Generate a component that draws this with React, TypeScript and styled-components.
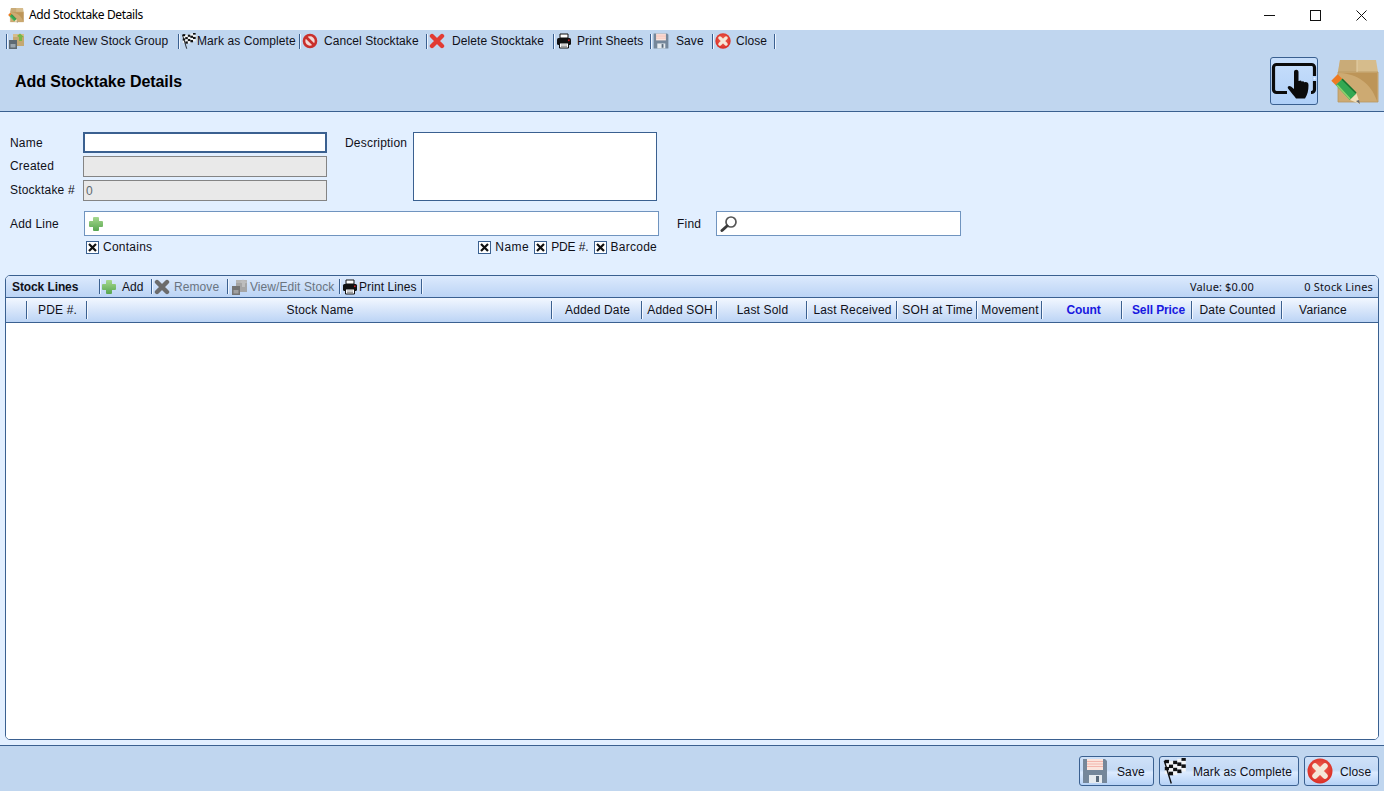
import React from "react";
import styled, { createGlobalStyle } from "styled-components";

const Global = createGlobalStyle`
  html, body { margin: 0; padding: 0; height: 100%; overflow: hidden; }
  body { font-family: "Liberation Sans", Arial, sans-serif; font-size: 12px; color: #101018; }
  * { box-sizing: border-box; }
`;

const Page = styled.div`
  width: 1384px; height: 791px; display: flex; flex-direction: column; background: #e2efff;
`;
const TitleBar = styled.div`
  height: 30px; flex: none; background: #fff; display: flex; align-items: center; padding-left: 8px;
`;
const TitleText = styled.span`
  font-family: "Noto Sans", sans-serif; font-size: 12px; margin: 0 0 1px 5px; color: #000; letter-spacing: -0.38px;
`;
const WinControls = styled.div`
  margin-left: auto; display: flex; height: 30px;
`;
const WinButton = styled.div`
  width: 46px; height: 30px; display: flex; align-items: center; justify-content: center;
`;
const Toolbar = styled.div`
  height: 22px; flex: none; background: #c0d6ef; display: flex; align-items: center; padding-left: 6px;
`;
const Sep = styled.span`
  width: 1px; height: 15px; flex: none; background: #3a6090; box-shadow: 1px 0 0 #eef5ff;
`;
const Tool = styled.div<{ $w: number; $gap: number; $pad?: number; $off?: boolean }>`
  width: ${p => p.$w}px; flex: none; display: flex; align-items: center; gap: ${p => p.$gap}px;
  padding-left: ${p => p.$pad ?? 2}px; white-space: nowrap; color: ${p => (p.$off ? "#6a7480" : "#101018")};
  letter-spacing: 0.08px;
`;
const Header = styled.div`
  height: 60px; flex: none; background: #c0d6ef; border-bottom: 1px solid #3a6090;
  display: flex; align-items: center; justify-content: space-between; padding: 0 5px 0 15px;
`;
const Heading = styled.h1`
  margin: 0; font-size: 16px; font-weight: 700; color: #000; letter-spacing: -0.05px;
`;
const HeaderIcons = styled.div`
  display: flex; gap: 13px; align-items: center; margin-bottom: 2px;
`;
const ModeButton = styled.div`
  width: 48px; height: 48px; border: 1px solid #3a6090; border-radius: 3px;
  background: linear-gradient(#c8dffb, #b0d0f8); display: flex; align-items: center; justify-content: center;
`;
const FormArea = styled.section`
  height: 163px; flex: none; padding: 20px 0 0 10px;
`;
const TopRow = styled.div`
  display: flex;
`;
const FieldColumn = styled.div`
  display: flex; flex-direction: column; gap: 3px;
`;
const FieldRow = styled.div`
  display: flex; align-items: center; height: 21px;
`;
const Label = styled.label<{ $w: number; $ml?: number; $raise?: boolean }>`
  width: ${p => p.$w}px; margin-left: ${p => p.$ml ?? 0}px; flex: none; letter-spacing: 0.2px; color: #101018;
  padding-bottom: ${p => (p.$raise ? 2 : 0)}px;
`;
const TextBox = styled.div<{ $focus?: boolean; $off?: boolean }>`
  width: 244px; height: 21px; padding-left: 2px; display: flex; align-items: center; color: #5f6a70;
  background: ${p => (p.$off ? "#e9e9e9" : "#fff")};
  border: ${p => (p.$focus ? "2px solid #3a6090" : "1px solid #848484")};
`;
const DescBlock = styled.div`
  display: flex; align-items: flex-start; margin-left: 18px;
`;
const DescLabel = styled(Label)`
  padding-top: 4px;
`;
const TextArea = styled.div`
  width: 244px; height: 69px; background: #fff; border: 1px solid #3a6090;
`;
const AddRow = styled.div`
  display: flex; align-items: center; margin-top: 10px;
`;
const SearchBox = styled.div<{ $w: number }>`
  width: ${p => p.$w}px; height: 25px; background: #fff; border: 1px solid #7094bf;
  display: flex; align-items: center; padding-left: 3px;
`;
const CheckRow = styled.div`
  width: 575px; margin: 4px 0 0 74px; height: 14px; display: flex; justify-content: space-between;
  padding: 0 2px;
`;
const CheckGroup = styled.div`
  display: flex; gap: 5px;
`;
const Check = styled.div<{ $ls: number }>`
  display: flex; align-items: center; gap: 4px; letter-spacing: ${p => p.$ls}px; white-space: nowrap;
`;
const Box = styled.span`
  width: 13px; height: 13px; background: #fff; border: 1px solid #3a6090; display: flex;
  align-items: center; justify-content: center;
`;
const Panel = styled.section`
  flex: 1; margin: 0 5px 5px; border: 1px solid #3a6090; border-radius: 5px; background: #fff;
  display: flex; flex-direction: column; overflow: hidden;
`;
const PanelBar = styled.div`
  height: 22px; flex: none; display: flex; align-items: center; padding-left: 6px; padding-right: 5px;
  background: linear-gradient(#dceafd, #bcd4f5); border-bottom: 1px solid #3a6090;
`;
const PanelTitle = styled.strong`
  width: 87px; flex: none; font-weight: 700; letter-spacing: -0.1px;
`;
const PanelStat = styled.span<{ $ml: string; $w?: number }>`
  margin-left: ${p => p.$ml}; ${p => (p.$w ? `width:${p.$w}px;text-align:right;` : "")}
  font-family: "Noto Sans", sans-serif; font-size: 11px; letter-spacing: 0.15px; color: #101018; white-space: nowrap;
`;
const ColumnRow = styled.div`
  height: 25px; flex: none; display: flex; align-items: center;
  background: linear-gradient(#f2f7ff, #bcd4f5); border-bottom: 1px solid #3a6090;
`;
const Column = styled.div<{ $w?: number; $blue?: boolean; $last?: boolean }>`
  ${p => (p.$w ? `width:${p.$w}px;flex:none;` : "flex:1;")}
  height: 18px; line-height: 19px; text-align: center; white-space: nowrap;
  letter-spacing: ${p => (p.$blue ? -0.1 : 0.16)}px;
  padding-left: ${p => (p.$last ? 0 : p.$blue ? 4 : 2)}px; padding-right: ${p => (p.$last ? 14 : 0)}px;
  color: ${p => (p.$blue ? "#1818e0" : "#101018")}; font-weight: ${p => (p.$blue ? 700 : 400)};
  ${p => (p.$last ? "" : "border-right:1px solid #3a6090;box-shadow:1px 0 0 #f4f8ff;")}
`;
const GridBody = styled.div`
  flex: 1; background: #fff;
`;
const Footer = styled.footer`
  height: 46px; flex: none; background: #c0d6ef; border-top: 1px solid #3a6090;
  display: flex; justify-content: flex-end; align-items: flex-start; gap: 5px; padding: 10px 5px 0 0;
`;
const FootButton = styled.button<{ $w: number; $gap: number }>`
  width: ${p => p.$w}px; height: 30px; padding: 0 0 0 2px; display: flex; align-items: center; gap: ${p => p.$gap}px;
  font: 12px "Liberation Sans", Arial, sans-serif; color: #101018; letter-spacing: 0.1px;
  border: 1px solid #3a6090; border-radius: 3px; white-space: nowrap;
  background: linear-gradient(#cfe1f8 0%, #c4daf5 45%, #dcebff 55%, #b6d2f6 100%);
`;
const FootLabel = styled.span`
  padding-top: 2px;
`;

type IP = { s?: number };

const CrateIcon = ({ s = 16 }: IP) => (
  <svg width={s} height={s} viewBox="0 0 48 48">
    <path d="M9 3h36l2 12H7z" fill="#d6bc8c" />
    <path d="M9 3h17v12H7z" fill="#c9ab78" />
    <path d="M7 15h40v30H7z" fill="#cdaa72" stroke="#b8985f" strokeWidth=".8" />
    <path d="M9 16c17 1 31 10 37 28V16z" fill="#bd9558" />
    <path d="M26 3v12" stroke="#e3cfa8" strokeWidth="1" />
    <path d="M3.500 20.500 8 25" stroke="#ee7a22" strokeWidth="9" />
    <path d="M8 25l14 15" stroke="#33a852" strokeWidth="9" />
    <path d="M6 28l13 14" stroke="#8ed06c" strokeWidth="1.600" />
    <path d="M11 22l14 14" stroke="#16732f" strokeWidth="1.600" />
    <path d="M25.500 36.500 19 43l10 4z" fill="#f1dfb9" />
    <path d="M25 44l4 3-1-4z" fill="#666" />
  </svg>
);
const GroupIcon = ({ off }: { off?: boolean }) => (
  <svg width="16" height="16" viewBox="0 0 16 16">
    <path d="M5 1h11v12H5z" fill={off ? "#a5a5a5" : "#c4a871"} />
    <path d="M5 1h11v3H5z" fill={off ? "#b5b5b5" : "#d6bc8c"} />
    <path d="M9 3l3-2.500L16 4l-2 .3V8h-3V4.300z" fill={off ? "#bdbdbd" : "#7ab648"} />
    <path d="M1 7h8v9H1z" fill={off ? "#757575" : "#5e6a72"} />
    <path d="M2.500 11h5v3.500h-5z" fill={off ? "#a0a0a0" : "#9aa6ae"} />
  </svg>
);
const Flag = ({ s = 16 }: IP) => {
  const cells: React.ReactNode[] = [];
  for (let r = 0; r < 4; r++)
    for (let c = 0; c < 5; c++) {
      const dy = 1.8 * Math.sin(c * 1.1);
      cells.push(<rect key={`${r}-${c}`} x={2 + c * 4.5} y={2 + r * 3.8 + dy - c * 0.25} width="4.600" height="3.900" fill={(r + c) % 2 ? "#f4f4f4" : "#111"} />);
    }
  return (
    <svg width={s} height={s} viewBox="0 0 26 28">
      <g>{cells}</g>
      <path d="M1.500 3 9 27.500" stroke="#111" strokeWidth="1.500" />
    </svg>
  );
};
const Cancel = () => (
  <svg width="16" height="16" viewBox="0 0 16 16">
    <circle cx="8" cy="8" r="6" fill="#f3d9d6" stroke="#c9302c" strokeWidth="2.6" />
    <path d="M4 4l8 8" stroke="#c9302c" strokeWidth="2.6" />
  </svg>
);
const Cross = ({ off }: { off?: boolean }) => (
  <svg width="16" height="16" viewBox="0 0 16 16">
    <path d="M3 3l10 10M13 3 3 13" stroke={off ? "#6c6c6c" : "#e23b33"} strokeWidth="4.4" strokeLinecap="round" />
  </svg>
);
const Printer = () => (
  <svg width="16" height="16" viewBox="0 0 16 16">
    <path d="M4 1h8v4H4z" fill="#fff" stroke="#111" />
    <rect x="1" y="5" width="14" height="7" rx="1.5" fill="#111" />
    <path d="M3.500 10h9v5h-9z" fill="#fff" stroke="#111" />
    <path d="M5 12h6M5 13.500h6" stroke="#777" strokeWidth=".7" />
    <rect x="12" y="6.500" width="1.600" height="1.600" fill="#d81f26" />
  </svg>
);
const Floppy = ({ s = 16 }: IP) => (
  <svg width={s} height={s} viewBox="0 0 26 26">
    <path d="M1 1h22l2 2v22H1z" fill="#75879a" />
    <path d="M5 1h16v11H5z" fill="#fbe5dd" />
    <path d="M5 3.500h16M5 6h16M5 8.500h16" stroke="#f3b6ad" strokeWidth="1" />
    <path d="M7 17h13v8H7z" fill="#e6ebef" />
    <path d="M14 18h3v6h-3z" fill="#5a6a7a" />
  </svg>
);
const CloseIcon = ({ s = 16 }: IP) => (
  <svg width={s} height={s} viewBox="0 0 26 26">
    <defs>
      <radialGradient id="closeRed" cx="50%" cy="45%" r="60%">
        <stop offset="0%" stopColor="#f26a5a" />
        <stop offset="100%" stopColor="#d8281f" />
      </radialGradient>
    </defs>
    <circle cx="13" cy="13" r="12.5" fill="url(#closeRed)" />
    <path d="M8 8l10 10M18 8 8 18" stroke="#f5e8d8" strokeWidth="5.500" strokeLinecap="round" />
  </svg>
);
const Plus = () => (
  <svg width="16" height="16" viewBox="0 0 16 16">
    <defs>
      <linearGradient id="plusGreen" x1="0" y1="0" x2="0" y2="1">
        <stop offset="0%" stopColor="#a6d88e" />
        <stop offset="100%" stopColor="#58a650" />
      </linearGradient>
    </defs>
    <path d="M6 1h4a1 1 0 0 1 1 1v3h3a1 1 0 0 1 1 1v4a1 1 0 0 1-1 1h-3v3a1 1 0 0 1-1 1H6a1 1 0 0 1-1-1v-3H2a1 1 0 0 1-1-1V6a1 1 0 0 1 1-1h3V2a1 1 0 0 1 1-1z" fill="url(#plusGreen)" />
  </svg>
);
const Magnifier = () => (
  <svg width="18" height="18" viewBox="0 0 18 18">
    <circle cx="11" cy="7" r="5" fill="#fff" stroke="#555" strokeWidth="1.700" />
    <path d="M7 11l-5 4.500" stroke="#3a3a3a" strokeWidth="3" strokeLinecap="round" />
  </svg>
);
const TabletHand = () => (
  <svg width="46" height="46" viewBox="0 0 46 46">
    <rect x="2.500" y="6.500" width="41" height="28" rx="3" fill="none" stroke="#0b0b0b" strokeWidth="3.200" />
    <path d="M16 32h24v6H16zM41 18h5v5h-5z" fill="#b4d2f8" />
    <circle cx="43.500" cy="20.500" r="1" fill="#eef6ff" />
    <path d="M23 14c0-3 4.500-3 4.500 0v9l2.500-.5.5 1 2-.3.5 1 2-.2c2 .3 2.500 1.500 2.500 3.500 0 5-1 9-3.500 13H25c-2-3-5-6-8-10-1-2 1-3.500 3-2l3 2.500z" fill="#0b0b0b" />
  </svg>
);
const X = () => (
  <svg width="9" height="9" viewBox="0 0 9 9">
    <path d="M1 1l7 7M8 1 1 8" stroke="#111" strokeWidth="2.200" />
  </svg>
);
const Labelled = ({ children, ls = 0.25 }: { children: string; ls?: number }) => (
  <Check $ls={ls}>
    <Box><X /></Box>
    {children}
  </Check>
);

const columns: { t: string; w?: number; blue?: boolean }[] = [
  { t: "", w: 21 }, { t: "PDE #.", w: 60 }, { t: "Stock Name", w: 465 }, { t: "Added Date", w: 90 },
  { t: "Added SOH", w: 75 }, { t: "Last Sold", w: 90 }, { t: "Last Received", w: 90 }, { t: "SOH at Time", w: 80 },
  { t: "Movement", w: 65 }, { t: "Count", w: 80, blue: true }, { t: "Sell Price", w: 70, blue: true },
  { t: "Date Counted", w: 90 }, { t: "Variance" },
];

export default function App() {
  return (
    <Page>
      <Global />
      <TitleBar>
        <CrateIcon />
        <TitleText>Add Stocktake Details</TitleText>
        <WinControls>
          <WinButton><svg width="11" height="11" viewBox="0 0 11 11"><path d="M0 5.500h11" stroke="#111" /></svg></WinButton>
          <WinButton><svg width="11" height="11" viewBox="0 0 11 11"><rect x=".5" y=".5" width="10" height="10" fill="none" stroke="#111" /></svg></WinButton>
          <WinButton><svg width="11" height="11" viewBox="0 0 11 11"><path d="M.5 .5l10 10M10.500 .5l-10 10" stroke="#111" /></svg></WinButton>
        </WinControls>
      </TitleBar>
      <Toolbar>
        <Sep />
        <Tool $w={171} $gap={9} $pad={1}><GroupIcon />Create New Stock Group</Tool>
        <Sep />
        <Tool $w={120} $gap={0}><Flag />Mark as Complete</Tool>
        <Sep />
        <Tool $w={126} $gap={6}><Cancel />Cancel Stocktake</Tool>
        <Sep />
        <Tool $w={126} $gap={7}><Cross />Delete Stocktake</Tool>
        <Sep />
        <Tool $w={96} $gap={5}><Printer />Print Sheets</Tool>
        <Sep />
        <Tool $w={61} $gap={7}><Floppy />Save</Tool>
        <Sep />
        <Tool $w={61} $gap={5}><CloseIcon />Close</Tool>
        <Sep />
      </Toolbar>
      <Header>
        <Heading>Add Stocktake Details</Heading>
        <HeaderIcons>
          <ModeButton><TabletHand /></ModeButton>
          <CrateIcon s={48} />
        </HeaderIcons>
      </Header>
      <FormArea>
        <TopRow>
          <FieldColumn>
            <FieldRow><Label $w={73}>Name</Label><TextBox $focus /></FieldRow>
            <FieldRow><Label $w={73} $raise>Created</Label><TextBox $off /></FieldRow>
            <FieldRow><Label $w={73} $raise>Stocktake #</Label><TextBox $off>0</TextBox></FieldRow>
          </FieldColumn>
          <DescBlock>
            <DescLabel $w={68}>Description</DescLabel>
            <TextArea />
          </DescBlock>
        </TopRow>
        <AddRow>
          <Label $w={74}>Add Line</Label>
          <SearchBox $w={575}><Plus /></SearchBox>
          <Label $w={39} $ml={18}>Find</Label>
          <SearchBox $w={245}><Magnifier /></SearchBox>
        </AddRow>
        <CheckRow>
          <Labelled>Contains</Labelled>
          <CheckGroup>
            <Labelled ls={0.45}>Name</Labelled>
            <Labelled ls={-0.1}>PDE #.</Labelled>
            <Labelled>Barcode</Labelled>
          </CheckGroup>
        </CheckRow>
      </FormArea>
      <Panel>
        <PanelBar>
          <PanelTitle>Stock Lines</PanelTitle>
          <Sep />
          <Tool $w={51} $gap={5} $pad={1}><Plus />Add</Tool>
          <Sep />
          <Tool $w={75} $gap={4} $off><Cross off />Remove</Tool>
          <Sep />
          <Tool $w={111} $gap={3} $pad={3} $off><GroupIcon off />View/Edit Stock</Tool>
          <Sep />
          <Tool $w={81} $gap={1}><Printer />Print Lines</Tool>
          <Sep />
          <PanelStat $ml="auto">Value: $0.00</PanelStat>
          <PanelStat $ml="0" $w={119}>0 Stock Lines</PanelStat>
        </PanelBar>
        <ColumnRow>
          {columns.map((c, i) => (
            <Column key={i} $w={c.w} $blue={c.blue} $last={i === columns.length - 1}>{c.t}</Column>
          ))}
        </ColumnRow>
        <GridBody />
      </Panel>
      <Footer>
        <FootButton $w={75} $gap={9}><Floppy s={26} /><FootLabel>Save</FootLabel></FootButton>
        <FootButton $w={140} $gap={5}><Flag s={26} /><FootLabel>Mark as Complete</FootLabel></FootButton>
        <FootButton $w={75} $gap={7}><CloseIcon s={26} /><FootLabel>Close</FootLabel></FootButton>
      </Footer>
    </Page>
  );
}
